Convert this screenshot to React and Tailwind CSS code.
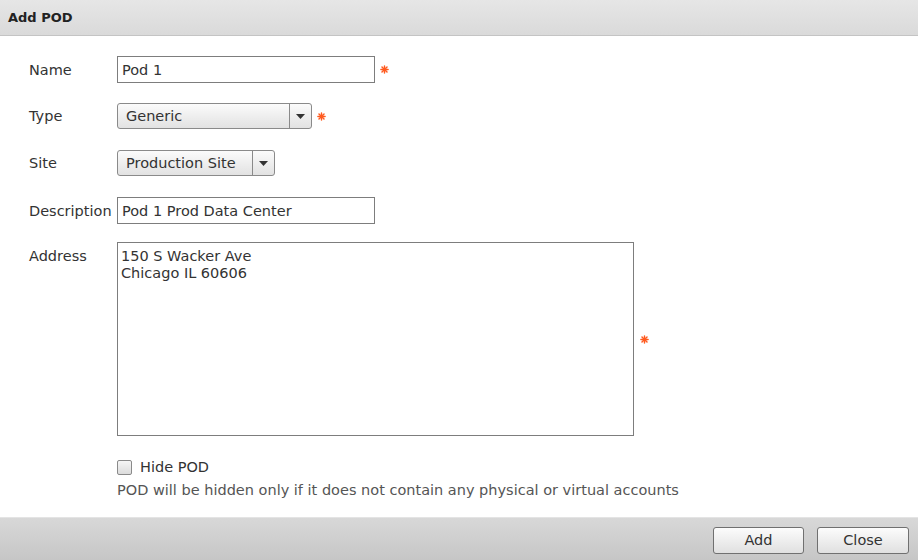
import React from "react";

const Star = () => (
  <svg width="9" height="9" viewBox="0 0 10 10" className="shrink-0">
    <g stroke="#ff5a1f" strokeWidth="1.6" strokeLinecap="round">
      <line x1="5" y1="1" x2="5" y2="9" />
      <line x1="1" y1="5" x2="9" y2="5" />
      <line x1="2.2" y1="2.2" x2="7.8" y2="7.8" />
      <line x1="7.8" y1="2.2" x2="2.2" y2="7.8" />
    </g>
    <circle cx="5" cy="5" r="2" fill="#ff5a1f" />
  </svg>
);

const Caret = () => (
  <svg width="9" height="5" viewBox="0 0 9 5">
    <path d="M0 0 H9 L4.5 5 Z" fill="#333" />
  </svg>
);

function Select({ value, width }) {
  return (
    <div
      className={`flex h-[26px] rounded-[3px] border border-[#8a8a8a] bg-gradient-to-b from-[#fbfbfb] to-[#e2e2e2] ${width}`}
    >
      <div className="flex flex-1 items-center pl-[8px] text-[#333]">{value}</div>
      <div className="flex w-[22px] items-center justify-center border-l border-[#8a8a8a]">
        <Caret />
      </div>
    </div>
  );
}

function Row({ label, children, className = "" }) {
  return (
    <div className={`flex items-center ${className}`}>
      <div className="w-[88px] text-[#333]">{label}</div>
      {children}
    </div>
  );
}

export default function App() {
  return (
    <div
      className="flex h-[560px] w-[918px] flex-col bg-white text-[14.5px] leading-[18px]"
      style={{ fontFamily: '"DejaVu Sans", Verdana, sans-serif' }}
    >
      <div className="flex h-[36px] items-center border-b border-[#c4c4c4] bg-gradient-to-b from-[#e6e6e6] to-[#dadada] pl-[8px] text-[13px] font-bold text-[#222]">
        Add POD
      </div>
      <div className="flex flex-1 flex-col pl-[29px] pt-[20px]">
        <Row label="Name">
          <div className="flex h-[27px] w-[258px] items-center border border-[#7d7d7d] pl-[4px] text-[#333]">
            Pod 1
          </div>
          <div className="ml-[5px]">
            <Star />
          </div>
        </Row>
        <Row label="Type" className="mt-[20px]">
          <Select value="Generic" width="w-[195px]" />
          <div className="ml-[5px]">
            <Star />
          </div>
        </Row>
        <Row label="Site" className="mt-[21px]">
          <Select value="Production Site" width="w-[158px]" />
        </Row>
        <Row label="Description" className="mt-[21px]">
          <div className="flex h-[27px] w-[258px] items-center border border-[#7d7d7d] pl-[4px] text-[#333]">
            Pod 1 Prod Data Center
          </div>
        </Row>
        <div className="mt-[18px] flex">
          <div className="w-[88px] pt-[5px] text-[#333]">Address</div>
          <div className="h-[194px] w-[517px] border border-[#7d7d7d] pl-[3px] pt-[5px] leading-[17px] text-[#333]">
            150 S Wacker Ave
            <br />
            Chicago IL 60606
          </div>
          <div className="ml-[6px] flex items-center">
            <Star />
          </div>
        </div>
        <div className="ml-[88px] mt-[22px] flex items-center">
          <div className="h-[15px] w-[15px] rounded-[2px] border border-[#8a8a8a] bg-gradient-to-b from-[#f6f6f6] to-[#dcdcdc]" />
          <span className="ml-[8px] text-[#333]">Hide POD</span>
        </div>
        <div className="ml-[88px] mt-[5px] text-[#555]">
          POD will be hidden only if it does not contain any physical or virtual accounts
        </div>
      </div>
      <div className="flex h-[43px] items-center justify-end gap-[13px] border-t border-[#e4e4e4] bg-gradient-to-b from-[#d8d8d8] to-[#c6c6c6] pr-[9px] pt-[2px]">
        <button className="h-[27px] w-[91px] rounded-[3px] border border-[#707070] bg-gradient-to-b from-[#fcfcfc] to-[#e0e0e0] text-[#333]">
          Add
        </button>
        <button className="h-[27px] w-[92px] rounded-[3px] border border-[#707070] bg-gradient-to-b from-[#fcfcfc] to-[#e0e0e0] text-[#333]">
          Close
        </button>
      </div>
    </div>
  );
}
